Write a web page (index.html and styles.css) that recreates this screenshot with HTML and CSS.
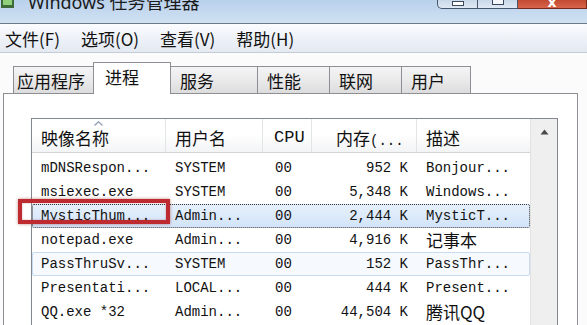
FILE: index.html
```html
<!DOCTYPE html>
<html lang="zh-CN">

<head>
    <meta charset="UTF-8">
    <title>Windows 任务管理器</title>
    <link rel="stylesheet" href="styles.css">
</head>

<body>
    <div class="window">
        <!-- title bar, cut off at the top -->
        <div class="titlebar">
            <svg class="app-icon" width="16" height="10" viewBox="0 0 16 10">
                <rect x="1" y="0" width="13" height="8" fill="#3f6b3a" />
                <rect x="3" y="0" width="9" height="5" fill="#8fd07a" />
            </svg>
            <span class="title">Windows 任务管理器</span>
            <div class="caption-buttons">
                <span class="cap cap-min"><i></i></span>
                <span class="cap cap-max"><i></i></span>
                <span class="cap cap-close"><i>x</i></span>
            </div>
        </div>

        <div class="menubar">
            <span class="menu-item">文件(F)</span>
            <span class="menu-item">选项(O)</span>
            <span class="menu-item">查看(V)</span>
            <span class="menu-item">帮助(H)</span>
        </div>

        <div class="tabs">
            <span class="tab">应用程序</span>
            <span class="tab active">进程</span>
            <span class="tab">服务</span>
            <span class="tab">性能</span>
            <span class="tab">联网</span>
            <span class="tab">用户</span>
        </div>

        <div class="panel">
            <div class="listview">
                <div class="list-main">
                    <div class="list-header">
                        <div class="col">映像名称
                            <svg class="sort-arrow" width="9" height="5" viewBox="0 0 9 5">
                                <path d="M0.5 4.5 L4.5 0.8 L8.5 4.5" fill="none" stroke="#8a9bb3" stroke-width="1.2" />
                            </svg>
                        </div>
                        <div class="col">用户名</div>
                        <div class="col col-cpu mono">CPU</div>
                        <div class="col col-mem">内存<span class="mono">(...</span></div>
                        <div class="col">描述</div>
                    </div>

                    <div class="rows">
                        <div class="row">
                            <span>mDNSRespon...</span><span>SYSTEM</span><span class="cpu">00</span><span class="mem">952 K</span><span>Bonjour...</span>
                        </div>
                        <div class="row">
                            <span>msiexec.exe</span><span>SYSTEM</span><span class="cpu">00</span><span class="mem">5,348 K</span><span>Windows...</span>
                        </div>
                        <div class="row selected">
                            <span>MysticThum...</span><span>Admin...</span><span class="cpu">00</span><span class="mem">2,444 K</span><span>MysticT...</span>
                        </div>
                        <div class="row">
                            <span>notepad.exe</span><span>Admin...</span><span class="cpu">00</span><span class="mem">4,916 K</span><span class="cjk">记事本</span>
                        </div>
                        <div class="row hover">
                            <span>PassThruSv...</span><span>SYSTEM</span><span class="cpu">00</span><span class="mem">152 K</span><span>PassThr...</span>
                        </div>
                        <div class="row">
                            <span>Presentati...</span><span>LOCAL...</span><span class="cpu">00</span><span class="mem">444 K</span><span>Present...</span>
                        </div>
                        <div class="row">
                            <span>QQ.exe *32</span><span>Admin...</span><span class="cpu">00</span><span class="mem">44,504 K</span><span class="cjk">腾讯QQ</span>
                        </div>
                    </div>
                </div>

                <div class="scrollbar">
                    <svg class="scroll-up" width="9" height="6" viewBox="0 0 9 6">
                        <path d="M0.5 5.5 L4.5 0.5 L8.5 5.5 Z" fill="#4a4a4a" />
                    </svg>
                </div>
            </div>
        </div>

        <!-- red highlight box over the MysticThum row -->
        <div class="callout"></div>
    </div>
</body>

</html>
```

FILE: styles.css
```css
body {
    margin: 0;
    padding: 0;
    background-color: #fbfbfb;
    font-family: "Noto Sans CJK SC", "Noto Sans", sans-serif;
    color: #1a1a1a;
    overflow: hidden;
}

.window {
    position: relative;
    width: 587px;
    height: 325px;
    overflow: hidden;
}

/* title bar */

.titlebar {
    display: flex;
    align-items: flex-start;
    height: 23px;
    background: linear-gradient(#b9d1eb, #d0e1f3);
    border-bottom: 1px solid #6c7a8a;
    overflow: hidden;
}

.title {
    margin-left: 12px;
    margin-top: -7px;
    font-family: "Noto Sans", "Noto Sans CJK SC", sans-serif;
    font-size: 18px;
    line-height: 18px;
    color: #1b1b1b;
    white-space: nowrap;
}

.caption-buttons {
    display: flex;
    margin-left: auto;
}

.cap {
    display: flex;
    justify-content: center;
    height: 9px;
    border: 1px solid #47586e;
    border-top: none;
    box-sizing: border-box;
}

.cap-min {
    width: 41px;
    border-radius: 0 0 0 5px;
    background: linear-gradient(#c9d8e9, #e0e9f4);
}

.cap-max {
    width: 40px;
    border-left: none;
    background: linear-gradient(#c9d8e9, #e0e9f4);
}

.cap-close {
    width: 69px;
    border-left: none;
    border-color: #7a2a1c;
    background: linear-gradient(#c24a32, #d7654a);
}

.cap-min i {
    width: 10px;
    height: 3px;
    margin-top: 1px;
    background-color: #fff;
    border: 1px solid #3b4a5c;
}

.cap-max i {
    width: 10px;
    height: 4px;
    border: 1px solid #3b4a5c;
    border-top: none;
    background-color: #f4f7fb;
}

.cap-close i {
    font-style: normal;
    font-family: "DejaVu Sans", sans-serif;
    font-weight: bold;
    font-size: 14px;
    line-height: 4px;
    color: #fff;
}

/* menu bar */

.menubar {
    display: flex;
    height: 28px;
    padding-left: 5px;
    background: linear-gradient(#fbfcfe, #eef2f8 50%, #e4e9f2);
    border-bottom: 1px solid #c6ccd6;
}

.menu-item {
    font-size: 17px;
    line-height: 30px;
    margin-right: 21px;
    color: #111;
}

/* tabs */

.tabs {
    display: flex;
    align-items: flex-end;
    height: 40px;
    padding-left: 13px;
}

.tab {
    box-sizing: border-box;
    height: 27px;
    padding-left: 9px;
    margin-left: -1px;
    border: 1px solid #8e8f94;
    border-bottom: none;
    background: linear-gradient(#f4f4f4, #e9e9e9 55%, #dcdcdc);
    font-size: 17px;
    line-height: 28px;
    color: #111;
}

.tab:nth-child(1) {
    width: 81px;
    margin-left: 0;
    padding-left: 3px;
}

.tab:nth-child(2) {
    width: 78px;
}

.tab:nth-child(3) {
    width: 88px;
}

.tab:nth-child(4) {
    width: 73px;
}

.tab:nth-child(5) {
    width: 73px;
}

.tab:nth-child(6) {
    width: 70px;
}

.tab.active {
    position: relative;
    z-index: 1;
    height: 32px;
    margin-bottom: -1px;
    padding-left: 11px;
    background: #fff;
    line-height: 28px;
}

/* tab panel with the process list */

.panel {
    width: 575px;
    height: 240px;
    margin-left: 3px;
    box-sizing: border-box;
    padding: 24px 0 0 27px;
    background-color: #fff;
    border: 1px solid #8e8f94;
}

.listview {
    display: flex;
    width: 527px;
    height: 220px;
    box-sizing: border-box;
    border: 1px solid #828790;
    border-bottom: none;
}

.list-main {
    width: 498px;
}

.list-header {
    display: grid;
    grid-template-columns: 134px 97px 49px 105px 113px;
    height: 33px;
    background: linear-gradient(#ffffff 45%, #f3f4f6);
    border-bottom: 1px solid #d5d5d5;
}

.list-header .col {
    position: relative;
    padding-left: 9px;
    border-right: 1px solid #e3e4e6;
    font-size: 17px;
    line-height: 37px;
    color: #111;
    white-space: nowrap;
    overflow: hidden;
}

.list-header .col:last-child {
    border-right: none;
}

.list-header .col-cpu {
    padding-left: 11px;
}

.list-header .col-mem {
    padding-left: 24px;
}

.sort-arrow {
    position: absolute;
    left: 62px;
    top: 2px;
}

.mono {
    font-family: "Liberation Mono", "Noto Sans CJK SC", monospace;
    font-size: 14px;
}

.rows {
    padding-top: 3px;
}

.row {
    display: grid;
    grid-template-columns: 134px 97px 49px 105px 113px;
    height: 24px;
    box-sizing: border-box;
    border: 1px solid transparent;
    font-family: "Liberation Mono", "Noto Sans CJK SC", monospace;
    font-size: 14px;
    line-height: 23px;
    color: #111;
    white-space: nowrap;
}

.row span {
    padding-left: 8px;
}

.row .cpu {
    padding-left: 11px;
}

.row .mem {
    padding-left: 0;
    padding-right: 10px;
    text-align: right;
}

.row .cjk {
    font-family: "Noto Sans CJK SC", sans-serif;
    font-size: 17px;
    line-height: 22px;
}

.row.selected {
    background: linear-gradient(#e6f0fb, #d2e4fa);
    border: 1px dotted #3a3a3a;
    border-radius: 2px;
}

.row.hover {
    background-color: #f6f9fd;
    border: 1px solid #c6dbf2;
    border-radius: 2px;
}

.scrollbar {
    display: flex;
    justify-content: center;
    width: 26px;
    padding-top: 10px;
    background-color: #efefef;
    border-left: 1px solid #e2e2e2;
}

/* red highlight frame */

.callout {
    position: absolute;
    left: 18px;
    top: 199px;
    width: 152px;
    height: 25px;
    box-sizing: border-box;
    border: 4px solid #bd2a2f;
    box-shadow: 0 0 3px rgba(140, 20, 20, 0.5), inset 0 0 2px rgba(140, 20, 20, 0.4);
}
```
